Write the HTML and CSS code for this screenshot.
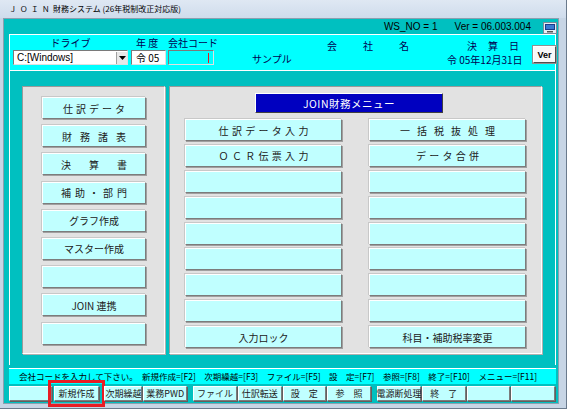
FILE: index.html
```html
<!DOCTYPE html>
<html lang="ja">
<head>
<meta charset="utf-8">
<link rel="stylesheet" href="styles.css">
</head>
<body>
<div class="win">
  <div class="titlebar"><span class="tjoin">ＪＯＩＮ</span>財務システム <span class="tsub">(26年税制改正対応版)</span></div>
  <div class="client">
    <div class="topinfo">
      <span class="ws">WS_NO = 1</span>
      <span class="ver">Ver = 06.003.004</span>
      <span class="pcicon">
        <svg width="14" height="12" viewBox="0 0 14 12">
          <rect x="0.5" y="0.5" width="13" height="11" fill="#e8eef4" stroke="#7a8a9a"/>
          <rect x="2" y="2" width="10" height="6" fill="#1a3a8a"/>
          <rect x="3" y="3" width="8" height="4" fill="#3a7ad0"/>
          <rect x="4" y="9" width="6" height="1.5" fill="#555"/>
        </svg>
      </span>
    </div>
    <div class="cpanel">
      <div class="fld drive">
        <div class="lbl">ドライブ</div>
        <div class="select"><span>C:[Windows]</span><span class="arrow"><svg width="7" height="4" viewBox="0 0 7 4"><path d="M0 0h7L3.5 4z" fill="#000"/></svg></span></div>
      </div>
      <div class="fld year">
        <div class="lbl">年 度</div>
        <div class="box">令 05</div>
      </div>
      <div class="fld code">
        <div class="lbl">会社コード</div>
        <div class="box cbox"><span class="caret"></span></div>
      </div>
      <div class="compname">サンプル</div>
      <div class="kaisha">会社名</div>
      <div class="kessan">
        <div class="klbl">決算日</div>
        <div class="kdate">令 05年12月31日</div>
      </div>
      <button class="verbtn">Ver</button>
    </div>
    <div class="frame">
      <div class="lpanel">
        <div class="lbtn l1">仕訳データ</div>
        <div class="lbtn l2">財務諸表</div>
        <div class="lbtn l3">決算書</div>
        <div class="lbtn l4">補助・部門</div>
        <div class="lbtn">グラフ作成</div>
        <div class="lbtn">マスター作成</div>
        <div class="lbtn"></div>
        <div class="lbtn">JOIN 連携</div>
        <div class="lbtn"></div>
      </div>
      <div class="rpanel">
        <div class="menutitle">JOIN財務メニュー</div>
        <div class="rgrid">
          <div class="rbtn r1">仕訳データ入力</div>
          <div class="rbtn r2">一括税抜処理</div>
          <div class="rbtn r1">ＯＣＲ伝票入力</div>
          <div class="rbtn r1">データ合併</div>
          <div class="rbtn"></div><div class="rbtn"></div>
          <div class="rbtn"></div><div class="rbtn"></div>
          <div class="rbtn"></div><div class="rbtn"></div>
          <div class="rbtn"></div><div class="rbtn"></div>
          <div class="rbtn"></div><div class="rbtn"></div>
          <div class="rbtn"></div><div class="rbtn"></div>
          <div class="rbtn">入力ロック</div>
          <div class="rbtn">科目・補助税率変更</div>
        </div>
      </div>
    </div>
    <div class="status">会社コードを入力して下さい。　新規作成=[F2]　次期繰越=[F3]　ファイル=[F5]　設　定=[F7]　参照=[F8]　終了=[F10]　メニュー=[F11]</div>
    <div class="fbar">
      <div class="fbtn w43"></div>
      <div class="fbtn w47 hl">新規作成</div>
      <div class="fbtn w38">次期繰越</div>
      <div class="fbtn w44">業務PWD</div>
      <div class="fbtn w44 gapl">ファイル</div>
      <div class="fbtn w44">仕訳転送</div>
      <div class="fbtn w44">設　定</div>
      <div class="fbtn w44">参　照</div>
      <div class="fbtn w44 gapl">電源断処理</div>
      <div class="fbtn w44">終　了</div>
      <div class="fbtn w44"></div>
      <div class="fbtn w44"></div>
    </div>
  </div>
</div>
</body>
</html>
```
FILE: styles.css
```css
html, body {
  margin: 0;
  padding: 0;
}
body {
  width: 567px;
  height: 409px;
  overflow: hidden;
  background: #c7d5e5;
  font-family: "Noto Sans CJK JP", "Noto Sans", sans-serif;
  color: #000;
}
.win {
  width: 567px;
  height: 409px;
  display: flex;
  flex-direction: column;
  box-sizing: border-box;
  border-right: 1px solid #6a7a8c;
  border-bottom: 1px solid #6a7a8c;
}
.titlebar {
  height: 18px;
  line-height: 18px;
  padding-left: 9px;
  font-size: 8px;
  background: linear-gradient(#dfe8f3, #cfdcec);
  white-space: nowrap;
}
.tjoin { letter-spacing: 3.5px; font-size: 7.5px; }
.tsub { font-size: 8px; }
.client {
  flex: 1;
  margin: 0 7px 4px 3px;
  background: #00c0c0;
  border: 1px solid #8aa0b0;
  display: flex;
  flex-direction: column;
  padding-left: 5px;
  padding-right: 2px;
}
.topinfo {
  height: 15px;
  display: flex;
  align-items: center;
  justify-content: flex-end;
  font-family: "Liberation Sans", sans-serif;
  font-size: 10px;
  white-space: nowrap;
}
.ws { margin-right: 17px; }
.ver { margin-right: 12px; }
.pcicon { display: flex; margin-right: -1px; margin-top: 2px; }
.cpanel {
  height: 35px;
  background: #00ffff;
  border-top: 1px solid #ffffff;
  border-left: 1px solid #ffffff;
  border-right: 1px solid #ffffff;
  display: flex;
  align-items: flex-start;
  font-size: 10px;
  white-space: nowrap;
  color: #000050;
}
.cpanel > * { flex-shrink: 0; }
.fld { display: flex; flex-direction: column; }
.lbl {
  height: 15px;
  line-height: 16px;
  text-align: center;
  font-size: 10px;
  white-space: nowrap;
}
.drive { margin-left: 3px; width: 115px; }
.select {
  height: 13px;
  background: #fff;
  border: 1px solid #7a7a7a;
  border-right-color: #e0e0e0;
  border-bottom-color: #e0e0e0;
  display: flex;
  align-items: center;
  justify-content: space-between;
  font-family: "Liberation Sans", sans-serif;
  font-size: 10px;
  padding-left: 3px;
  color: #000;
}
.arrow {
  width: 10px;
  height: 12px;
  background: #e8e8e8;
  border-left: 1px solid #a0a0a0;
  display: flex;
  align-items: center;
  justify-content: center;
}
.year { margin-left: 3px; width: 35px; }
.year .lbl { text-align: left; padding-left: 5px; }
.box {
  height: 13px;
  background: #fff;
  border: 1px solid #7a7a7a;
  border-right-color: #e0e0e0;
  border-bottom-color: #e0e0e0;
  font-size: 10px;
  line-height: 13px;
  padding-left: 4px;
  color: #000;
}
.code { margin-left: 2px; width: 46px; }
.code .lbl { text-align: left; }
.cbox { background: #00ffff; position: relative; }
.caret {
  position: absolute;
  right: 4px;
  top: 2px;
  width: 1px;
  height: 10px;
  background: #e02020;
}
.compname {
  width: 75px;
  margin-left: 38px;
  margin-top: 16px;
}
.kaisha {
  width: 120px;
  margin-top: 3px;
  letter-spacing: 26px;
}
.kessan {
  width: 78px;
  display: flex;
  flex-direction: column;
}
.klbl { margin-top: 3px; height: 14px; margin-left: 20px; letter-spacing: 11px; }
.kdate { font-size: 10px; }
.verbtn {
  margin-left: 8px;
  margin-top: 11px;
  width: 23px;
  height: 17px;
  padding: 0;
  background: #f8f8f8;
  border: 1px solid #fff;
  border-right-color: #505050;
  border-bottom-color: #505050;
  outline: 1px solid #909090;
  font-family: "Liberation Sans", sans-serif;
  font-weight: bold;
  font-size: 9px;
  color: #000;
}
.frame {
  height: 295px;
  border-top: 1px solid #ffffff;
  border-left: 1px solid #ffffff;
  border-right: 1px solid #ffffff;
  box-sizing: border-box;
  display: flex;
  padding: 15px 0 0 12px;
  gap: 4px;
}
.lpanel, .rpanel {
  background: #e2e2e2;
  height: 268px;
  box-sizing: border-box;
  border: 1px solid #ffffff;
  border-left-color: #9a9a9a;
  border-top-color: #9a9a9a;
  box-shadow: 1px 1px 0 #b0b0b0;
}
.lpanel {
  width: 143px;
  display: flex;
  flex-direction: column;
  align-items: center;
  padding-top: 10px;
  gap: 6.2px;
}
.lbtn, .rbtn, .fbtn {
  box-sizing: border-box;
  background: #c0ffff;
  border: 1px solid #ffffff;
  border-right-color: #7c7c7c;
  border-bottom-color: #7c7c7c;
  box-shadow: 1px 1px 0 #a0a0a0, -1px -1px 0 #c8c8c8;
  font-size: 10px;
  color: #202020;
  display: flex;
  align-items: center;
  justify-content: center;
  white-space: nowrap;
}
.lbtn {
  width: 104px;
  height: 22px;
  margin-left: 1px;
}
.l1 { letter-spacing: 3px; text-indent: 3px; }
.l2 { letter-spacing: 8px; text-indent: 8px; }
.l3 { letter-spacing: 18px; text-indent: 18px; }
.l4 { letter-spacing: 4px; text-indent: 4px; }
.r1 { letter-spacing: 3.3px; text-indent: 3.3px; }
.r2 { letter-spacing: 7px; text-indent: 7px; }
.rpanel {
  width: 373px;
  display: flex;
  flex-direction: column;
}
.menutitle {
  align-self: flex-start;
  margin-left: 85px;
  margin-top: 6px;
  width: 188px;
  height: 20px;
  box-sizing: border-box;
  background: #0000c0;
  color: #ffffff;
  border: 1px solid #ffffff;
  border-right-color: #404040;
  border-bottom-color: #404040;
  font-size: 10.5px;
  letter-spacing: 0.5px;
  display: flex;
  align-items: center;
  justify-content: center;
}
.rgrid {
  margin-top: 6px;
  margin-left: 15px;
  display: grid;
  grid-template-columns: 157px 157px;
  grid-auto-rows: 22px;
  column-gap: 27px;
  row-gap: 3.9px;
}
.status {
  margin-top: 3px;
  height: 15px;
  line-height: 15px;
  background: #00ffff;
  border-top: 1px solid #ffffff;
  padding-left: 10px;
  font-size: 8.5px;
  white-space: nowrap;
  overflow: hidden;
}
.fbar {
  margin-top: 2px;
  display: flex;
  height: 17px;
  align-items: stretch;
}
.fbtn {
  height: 15px;
  font-size: 9px;
  box-shadow: 1px 1px 0 #606060;
  margin-right: 1px;
}
.w43 { width: 43px; }
.w47 { width: 46px; }
.w38 { width: 38px; }
.w44 { width: 44px; }
.gapl { margin-left: 5px; }
.hl { margin-left: 1px; margin-right: 5px; outline: 3px solid #e81c24; outline-offset: 3px; }
```
